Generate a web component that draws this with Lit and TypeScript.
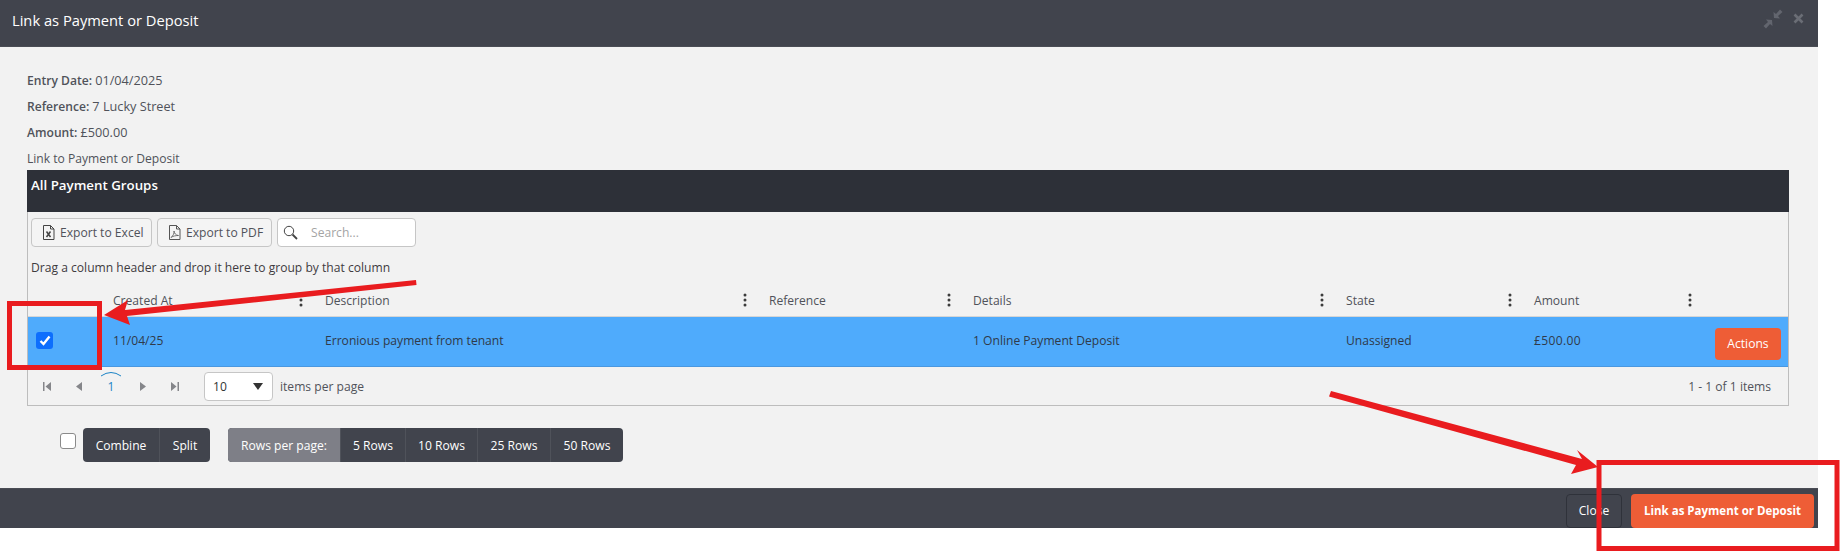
import { LitElement, html, css, svg } from "lit";
import { customElement } from "lit/decorators.js";

@customElement("app-root")
export class AppRoot extends LitElement {
  static styles = css`
    :host { display: block; width: 1840px; height: 552px; position: relative; overflow: hidden; background: #fff; font-family: "Open Sans", "Noto Sans", sans-serif; font-size: 12.1px; color: #50525a; }
    * { box-sizing: border-box; }
    .modal { width: 1818px; height: 528px; display: flex; flex-direction: column; background: #f2f2f2; }
    .head { height: 47px; flex: none; background: #41444d; color: #fff; display: flex; align-items: center; justify-content: space-between; padding: 0 14px 6px 12px; font-size: 14.7px; border-bottom: 1px solid #4a4d55; }
    .head-icons { display: flex; align-items: center; gap: 10px; margin-top: -3px; }
    .body { flex: 1; padding: 20px 29px 0 27px; }
    .line { height: 26px; line-height: 26px; }
    .line b { font-weight: 600; font-size: 12.1px; }
    .line .v { font-size: 12.7px; }
    .line.last { height: 25px; line-height: 27px; }
    .bar { height: 42px; background: #2d3038; color: #fff; font-weight: 600; font-size: 13.3px; padding: 6px 4px; line-height: 18px; }
    .grid { border: 1px solid #bdbdbd; border-top: 0; height: 194px; display: flex; flex-direction: column; }
    .tools { display: flex; gap: 5px; padding: 6px 3px 0; height: 40px; flex: none; }
    .tbtn { display: flex; align-items: center; gap: 5px; height: 29px; border: 1px solid #c6c6c6; border-radius: 4px; background: #f4f4f4; padding: 0 0 0 10px; color: #50525a; }
    .tbtn.x { width: 121px; }
    .tbtn.p { width: 115px; }
    .search { width: 139px; height: 29px; border: 1px solid #c6c6c6; border-radius: 4px; background: #fff; display: flex; align-items: center; gap: 13px; padding: 0 5px; color: #a4a4a4; }
    .drag { height: 32px; line-height: 32px; padding-left: 3px; flex: none; color: #3f3b3f; }
    .cols { display: grid; grid-template-columns: 76px 212px 444px 204px 373px 188px 180px 1fr; }
    .hrow { height: 33px; flex: none; border-bottom: 1px solid #d6d6d6; }
    .hcell { display: flex; align-items: center; justify-content: space-between; padding: 0 13px 0 9px; }
    .row { height: 50px; flex: none; background: #4fabfc; color: #2f3a4a; border-bottom: 1px solid #4a98e0; }
    .cell { display: flex; align-items: center; padding: 0 0 2px 9px; }
    .cell.first { padding: 0 0 3px 8px; }
    .num { letter-spacing: .35px; }
    .chk { width: 17px; height: 17px; border-radius: 3px; background: #0d6efd; display: flex; align-items: center; justify-content: center; }
    .cell.act { padding: 4px 7px 0 0; justify-content: flex-end; }
    .actions { width: 66px; height: 32px; background: #ee5d36; color: #fff; border-radius: 4px; display: flex; align-items: center; justify-content: center; }
    .pager { flex: 1; display: flex; align-items: center; padding: 0 17px 0 3px; }
    .pg { width: 32px; display: flex; justify-content: center; }
    .pnum { position: relative; color: #1c84c6; }
    .arc { position: absolute; left: 5px; top: -7px; }
    .select { width: 69px; height: 29px; margin-left: 13px; border: 1px solid #c6c6c6; border-radius: 4px; background: #fff; display: flex; align-items: center; justify-content: space-between; padding: 0 9px 0 8px; color: #333; }
    .ipp { margin-left: 7px; }
    .total { margin-left: auto; }
    .ctl { display: flex; align-items: flex-start; padding: 22px 0 0 33px; }
    .box { width: 16px; height: 16px; border: 1.5px solid #8a8a8a; border-radius: 3px; background: #fff; margin-top: 5px; margin-right: 7px; }
    .grp { display: flex; height: 34px; background: #41444d; border-radius: 4px; color: #fff; overflow: hidden; }
    .grp > div { display: flex; align-items: center; justify-content: center; border-left: 1px solid #4f525a; height: 100%; }
    .grp > div:first-child { border-left: 0; }
    .grp .lbl { background: #7e7f87; }
    .w76 { width: 76px; } .w51 { width: 51px; } .w112 { width: 112px; } .w65 { width: 65px; } .w72 { width: 72px; } .w73 { width: 73px; }
    .g2 { margin-left: 18px; }
    .foot { height: 40px; flex: none; background: #41444d; border-top: 1px solid #4a4d55; display: flex; justify-content: flex-end; align-items: center; gap: 9px; padding: 4px 4px 0 0; }
    .close { width: 56px; height: 34px; border: 1px solid #2f323a; border-radius: 4px; color: #fff; display: flex; align-items: center; justify-content: center; }
    .link { width: 183px; height: 34px; background: #ee5d36; border-radius: 4px; color: #fff; font-weight: 700; font-size: 11.5px; display: flex; align-items: center; justify-content: center; }
    .overlay { position: absolute; left: 0; top: 0; pointer-events: none; }
  `;

  private cols = ["Created At", "Description", "Reference", "Details", "State", "Amount"];
  private dots = html`<svg width="4" height="14" viewBox="0 0 4 14"><circle cx="2" cy="2" r="1.5" fill="#3c3c3c"/><circle cx="2" cy="7" r="1.5" fill="#3c3c3c"/><circle cx="2" cy="12" r="1.5" fill="#3c3c3c"/></svg>`;

  private pagerIcon(d: string) {
    return html`<div class="pg"><svg width="10" height="11" viewBox="0 0 10 11"><path d=${d} fill="#85868a"/></svg></div>`;
  }

  render() {
    return html`
      <div class="modal">
        <div class="head">
          <span>Link as Payment or Deposit</span>
          <div class="head-icons">
            <svg width="20" height="20" viewBox="0 0 20 20" fill="#62656e"><path d="M11 9 L10.500 3 L13 5 L17 0.500 L19.500 3 L15 7 L17 9.500 Z"/><path d="M9 11 L9.500 17 L7 15 L3 19.500 L0.500 17 L5 13 L3 10.500 Z"/></svg>
            <svg width="11" height="11" viewBox="0 0 11 11"><path d="M1.500 1.500 L9.500 9.500 M9.500 1.500 L1.500 9.500" stroke="#6a6d75" stroke-width="2.600"/></svg>
          </div>
        </div>
        <div class="body">
          <div class="line"><b>Entry Date:</b> <span class="v">01/04/2025</span></div>
          <div class="line"><b>Reference:</b> <span class="v">7 Lucky Street</span></div>
          <div class="line"><b>Amount:</b> <span class="v">£500.00</span></div>
          <div class="line last">Link to Payment or Deposit</div>
          <div class="bar">All Payment Groups</div>
          <div class="grid">
            <div class="tools">
              <div class="tbtn x">
                <svg width="13" height="15" viewBox="0 0 13 15" fill="none" stroke="#444"><path d="M1.500 .5 H8.500 L12 4 V14.500 H1.500 Z M8.500 .5 V4 H12"/><path d="M4.500 6.500 L8.500 12 M8.500 6.500 L4.500 12" stroke-width="1.500"/></svg>
                Export to Excel
              </div>
              <div class="tbtn p">
                <svg width="13" height="15" viewBox="0 0 13 15" fill="none" stroke="#555"><path d="M1.500 .5 H8.500 L12 4 V14.500 H1.500 Z M8.500 .5 V4 H12"/><path d="M3 12.500 C5 11 6.500 8 6 6 C6 8 8 10.500 10.500 10.500 C8 10.500 5 11 3 12.500 Z" stroke-width=".8"/></svg>
                Export to PDF
              </div>
              <div class="search">
                <svg width="15" height="15" viewBox="0 0 15 15" fill="none" stroke="#444"><circle cx="6" cy="6" r="4.700"/><path d="M9.500 9.500 L14 14" stroke-width="1.800"/></svg>
                Search...
              </div>
            </div>
            <div class="drag">Drag a column header and drop it here to group by that column</div>
            <div class="cols hrow">
              <div></div>
              ${this.cols.map((c) => html`<div class="hcell"><span>${c}</span>${this.dots}</div>`)}
              <div></div>
            </div>
            <div class="cols row">
              <div class="cell first"><div class="chk"><svg width="12" height="11" viewBox="0 0 12 11" fill="none"><path d="M1.500 6 L4.500 9 L10.500 1.500" stroke="#fff" stroke-width="2.400"/></svg></div></div>
              <div class="cell">11/04/25</div>
              <div class="cell">Erronious payment from tenant</div>
              <div class="cell"></div>
              <div class="cell">1 Online Payment Deposit</div>
              <div class="cell">Unassigned</div>
              <div class="cell num">£500.00</div>
              <div class="cell act"><div class="actions">Actions</div></div>
            </div>
            <div class="pager">
              ${this.pagerIcon("M1 1 H2.500 V10 H1 Z M9 1 V10 L3.500 5.500 Z")}
              ${this.pagerIcon("M8 1 V10 L2 5.500 Z")}
              <div class="pg pnum"><svg class="arc" width="22" height="6" viewBox="0 0 22 6" fill="none"><path d="M1 5 Q11 -2 21 5" stroke="#1c84c6"/></svg>1</div>
              ${this.pagerIcon("M2 1 V10 L8 5.500 Z")}
              ${this.pagerIcon("M9 1 H7.500 V10 H9 Z M1 1 V10 L6.500 5.500 Z")}
              <div class="select">10 <svg width="10" height="7" viewBox="0 0 10 7"><path d="M0 0 H10 L5 7 Z" fill="#333"/></svg></div>
              <span class="ipp">items per page</span>
              <span class="total">1 - 1 of 1 items</span>
            </div>
          </div>
          <div class="ctl">
            <div class="box"></div>
            <div class="grp">
              <div class="w76">Combine</div>
              <div class="w51">Split</div>
            </div>
            <div class="grp g2">
              <div class="lbl w112">Rows per page:</div>
              <div class="w65">5 Rows</div>
              <div class="w72">10 Rows</div>
              <div class="w73">25 Rows</div>
              <div class="w73">50 Rows</div>
            </div>
          </div>
        </div>
        <div class="foot">
          <div class="close">Close</div>
          <div class="link">Link as Payment or Deposit</div>
        </div>
      </div>
      <svg class="overlay" width="1840" height="552" viewBox="0 0 1840 552">
        ${svg`
          <rect x="9.500" y="303.500" width="90" height="64" fill="none" stroke="#e91c1f" stroke-width="5"/>
          <path d="M416 280 L125 310 L128 300 L104 315 L130 325 L127 316 L416.500 285 Z" fill="#e91c1f"/>
          <rect x="1599" y="462.500" width="238" height="86" fill="none" stroke="#e91c1f" stroke-width="5"/>
          <path d="M1331 391 L1582 459 L1577 450 L1598 467 L1571 474 L1576 465 L1329 396.500 Z" fill="#e91c1f"/>
        `}
      </svg>
    `;
  }
}
